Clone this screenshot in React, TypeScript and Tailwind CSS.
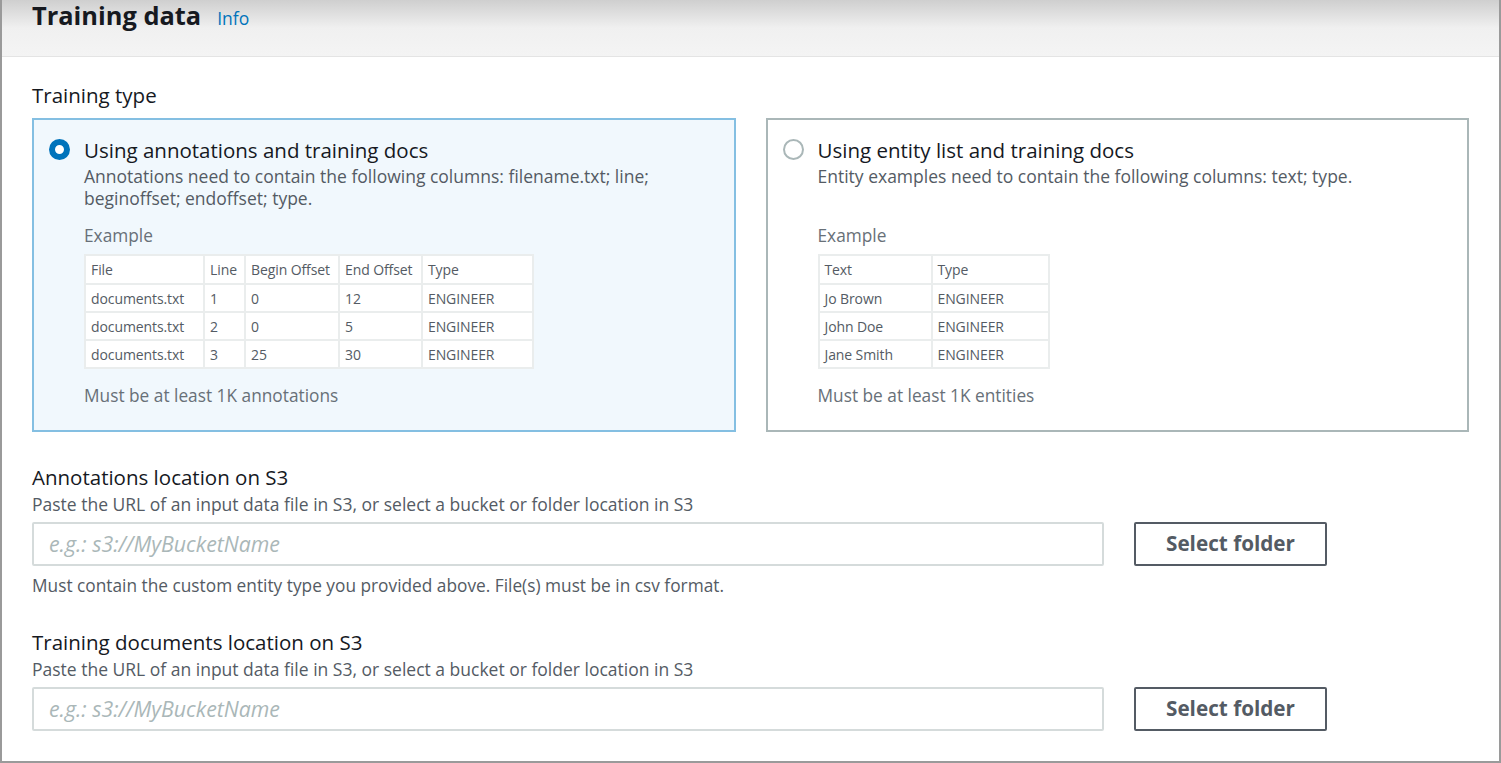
import React from 'react'

const annotationRows = [
  ['documents.txt', '1', '0', '12', 'ENGINEER'],
  ['documents.txt', '2', '0', '5', 'ENGINEER'],
  ['documents.txt', '3', '25', '30', 'ENGINEER'],
]

const entityRows = [
  ['Jo Brown', 'ENGINEER'],
  ['John Doe', 'ENGINEER'],
  ['Jane Smith', 'ENGINEER'],
]

const Radio = ({ checked }: { checked: boolean }) =>
  checked ? (
    <span className="mt-[2px] h-[21px] w-[21px] shrink-0 rounded-full border-[6px] border-[#0073bb] bg-white" />
  ) : (
    <span className="mt-[2px] h-[21px] w-[21px] shrink-0 rounded-full border-2 border-[#aab7b8] bg-white" />
  )

const ExampleTable = ({ head, rows, widths }: { head: string[]; rows: string[][]; widths: string[] }) => (
  <table className="table-fixed border-collapse whitespace-nowrap bg-white text-[14px] tracking-[-0.1px] text-[#545b64]">
    <thead>
      <tr className="h-[29px]">
        {head.map((h, i) => (
          <td key={h} className={`border-2 border-[#eaeded] px-[5px] ${widths[i]}`}>
            {h}
          </td>
        ))}
      </tr>
    </thead>
    <tbody>
      {rows.map((r, ri) => (
        <tr key={ri} className="h-[28px]">
          {r.map((c, ci) => (
            <td key={ci} className="border-2 border-[#eaeded] px-[5px]">
              {c}
            </td>
          ))}
        </tr>
      ))}
    </tbody>
  </table>
)

const S3Field = ({ label, hint }: { label: string; hint?: string }) => (
  <div>
    <div className="text-[20.5px] leading-[26px] text-[#16191f]">{label}</div>
    <div className="mt-[2px] text-[17.5px] leading-[24px] text-[#545b64]">
      Paste the URL of an input data file in S3, or select a bucket or folder location in S3
    </div>
    <div className="mt-[6px] flex items-center gap-[30px]">
      <div className="flex h-[44px] w-[1072px] items-center rounded-[2px] border-2 border-[#d5dbdb] px-[15px] text-[21.3px] italic text-[#aab7b8]">
        e.g.: s3://MyBucketName
      </div>
      <button className="h-[44px] w-[193px] rounded-[2px] border-2 border-[#545b64] bg-white text-[20.7px] font-bold text-[#545b64]">
        Select folder
      </button>
    </div>
    {hint && <div className="mt-[9px] text-[17.3px] leading-[22px] text-[#545b64]">{hint}</div>}
  </div>
)

export default function App() {
  return (
    <div className="h-[763px] w-[1501px] overflow-hidden border-l-2 border-r-2 border-b-2 border-[#9a9a9a] bg-white font-['Open_Sans',sans-serif]">
      <header className="flex h-[57px] items-baseline border-b border-[#e4e4e4] bg-gradient-to-b from-[#cfcfcf] via-[#f0f0f0] to-[#f4f4f4] px-[30px] pt-[1px]">
        <h1 className="text-[25.4px] font-bold leading-[28px] text-[#16191f]">Training data</h1>
        <span className="ml-[16px] text-[17.5px] leading-[28px] text-[#0073bb]">Info</span>
      </header>

      <div className="px-[30px]">
        <div className="mt-[25px] text-[20.5px] leading-[26px] text-[#16191f]">Training type</div>

        <div className="mt-[10px] flex gap-[30px]">
          <div className="flex h-[314px] w-[706px] gap-[14px] border-2 border-[#84bfe2] bg-[#f1f8fd] pl-[15px] pt-[17px]">
            <Radio checked />
            <div>
              <div className="text-[20.5px] leading-[26px] text-[#16191f]">Using annotations and training docs</div>
              <div className="mt-[2px] text-[17.5px] leading-[22px] text-[#545b64]">
                Annotations need to contain the following columns: filename.txt; line;
                <br />
                beginoffset; endoffset; type.
              </div>
              <div className="mt-[16px] mb-[7px] text-[17.3px] leading-[22px] text-[#687078]">Example</div>
              <ExampleTable
                head={['File', 'Line', 'Begin Offset', 'End Offset', 'Type']}
                rows={annotationRows}
                widths={['w-[119px]', 'w-[41px]', 'w-[94px]', 'w-[83px]', 'w-[111px]']}
              />
              <div className="mt-[16px] text-[17.3px] leading-[22px] text-[#687078]">Must be at least 1K annotations</div>
            </div>
          </div>

          <div className="flex h-[314px] w-[706px] gap-[14px] border-2 border-[#aab7b8] bg-white pl-[15px] pt-[17px]">
            <Radio checked={false} />
            <div>
              <div className="text-[20.5px] leading-[26px] text-[#16191f]">Using entity list and training docs</div>
              <div className="mt-[2px] text-[17.5px] leading-[22px] text-[#545b64]">
                Entity examples need to contain the following columns: text; type.
              </div>
              <div className="mt-[38px] mb-[7px] text-[17.3px] leading-[22px] text-[#687078]">Example</div>
              <ExampleTable head={['Text', 'Type']} rows={entityRows} widths={['w-[113px]', 'w-[117px]']} />
              <div className="mt-[16px] text-[17.3px] leading-[22px] text-[#687078]">Must be at least 1K entities</div>
            </div>
          </div>
        </div>

        <div className="mt-[32px]">
          <S3Field
            label="Annotations location on S3"
            hint="Must contain the custom entity type you provided above. File(s) must be in csv format."
          />
        </div>
        <div className="mt-[32px]">
          <S3Field label="Training documents location on S3" />
        </div>
      </div>
    </div>
  )
}
